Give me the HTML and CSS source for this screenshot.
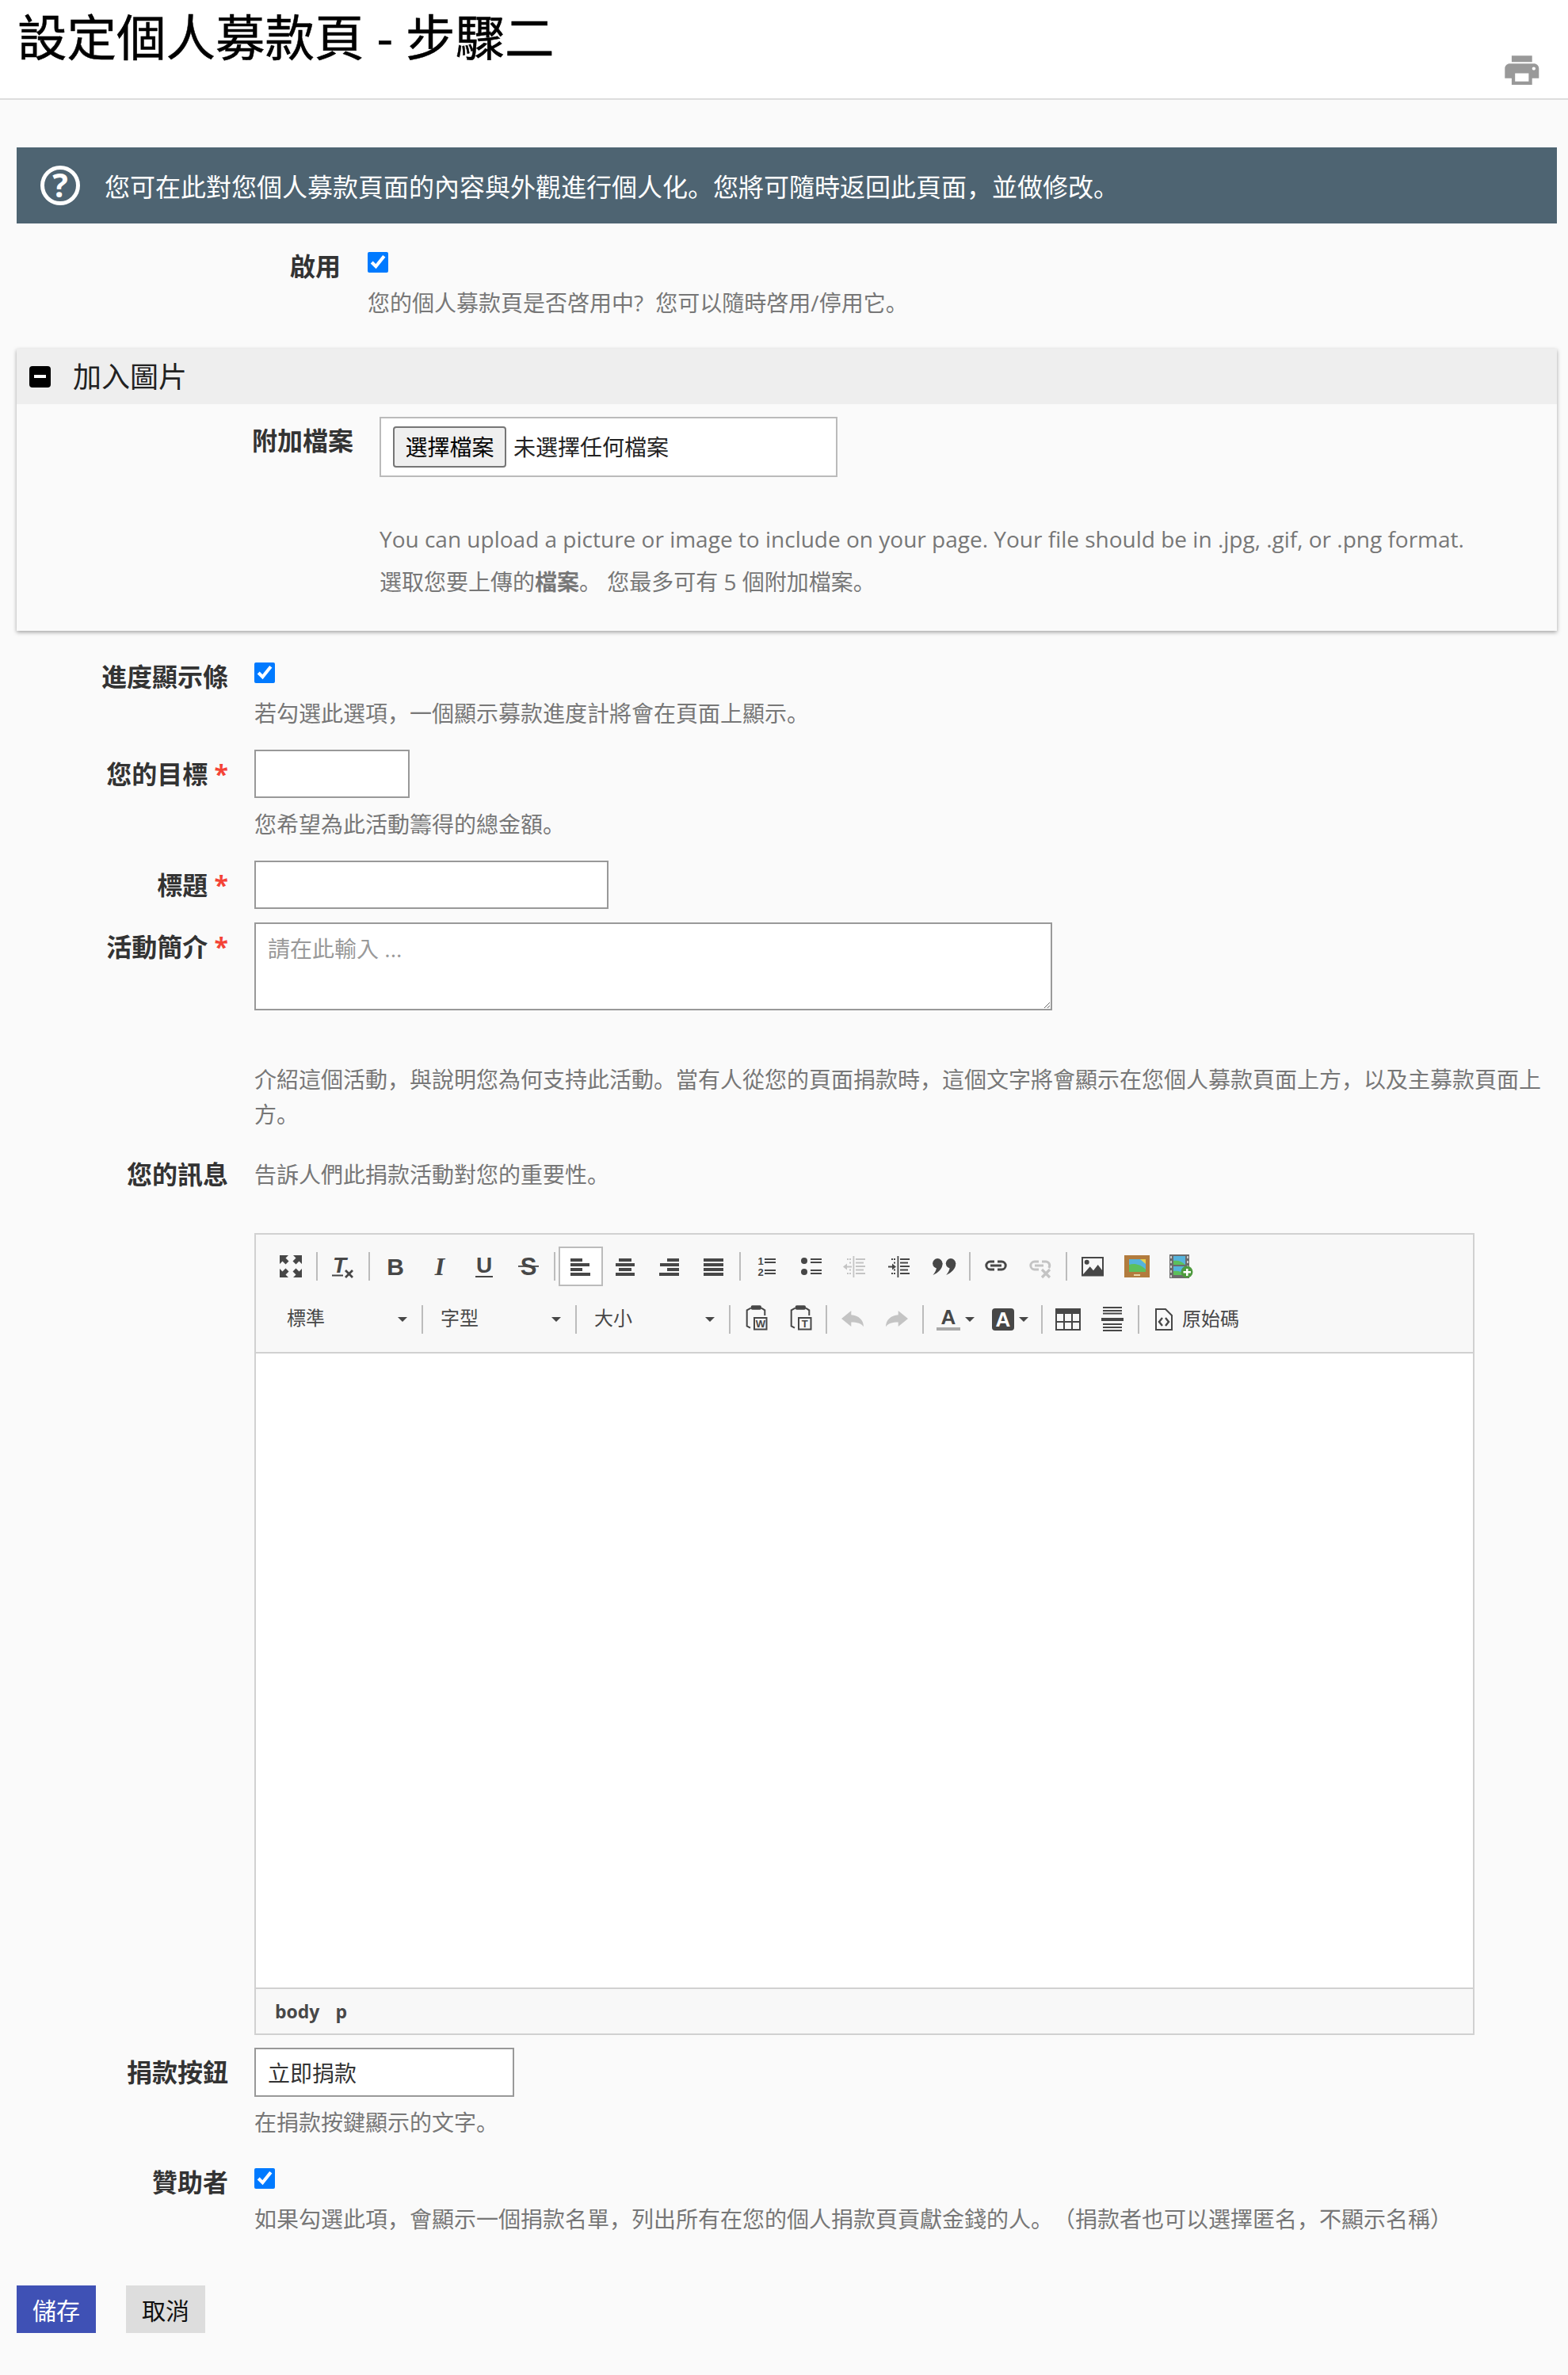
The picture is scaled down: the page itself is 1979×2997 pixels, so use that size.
FILE: index.html
```html
<!DOCTYPE html>
<html lang="zh-Hant">
<head>
<meta charset="utf-8">
<title>設定個人募款頁 - 步驟二</title>
<link rel="stylesheet" href="styles.css">
</head>
<body>
<header class="page-head">
  <h1>設定個人募款頁 - 步驟二</h1>
  <svg class="printer" viewBox="0 0 24 24" preserveAspectRatio="none"><path fill="#999" fill-rule="evenodd" d="M19 8H5c-1.66 0-3 1.34-3 3v6h4v4h12v-4h4v-6c0-1.66-1.34-3-3-3zm-3 11H8v-5h8v5zm3-7c-.55 0-1-.45-1-1s.45-1 1-1 1 .45 1 1-.45 1-1 1zm-1-9H6v4h12V3z"/></svg>
</header>
<main class="page">
  <div class="banner">
    <svg class="banner-icon" viewBox="0 0 50 50"><circle cx="25" cy="25" r="22.5" fill="none" stroke="#fff" stroke-width="5"/><text class="qmark" x="25" y="40" text-anchor="middle" fill="#fff">?</text></svg>
    <span>您可在此對您個人募款頁面的內容與外觀進行個人化。您將可隨時返回此頁面，並做修改。</span>
  </div>

  <div class="row row-enable">
    <label class="lab">啟用</label>
    <div class="ctl">
      <input class="chk" type="checkbox" checked>
      <p class="help help-chk help-enable">您的個人募款頁是否啓用中? 您可以隨時啓用/停用它。</p>
    </div>
  </div>

  <section class="panel">
    <div class="panel-head"><span class="toggle"></span><span class="panel-title">加入圖片</span></div>
    <div class="panel-body">
      <div class="row row-file">
        <label class="lab lab-field">附加檔案</label>
        <div class="ctl">
          <div class="filebox"><span class="filebtn">選擇檔案</span><span class="filename">未選擇任何檔案</span></div>
          <p class="help help-file">You can upload a picture or image to include on your page. Your file should be in .jpg, .gif, or .png format.</p>
          <p class="help help-file2">選取您要上傳的<b>檔案</b>。 您最多可有 5 個附加檔案。</p>
        </div>
      </div>
    </div>
  </section>

  <div class="row row-progress">
    <label class="lab">進度顯示條</label>
    <div class="ctl">
      <input class="chk" type="checkbox" checked>
      <p class="help help-chk">若勾選此選項，一個顯示募款進度計將會在頁面上顯示。</p>
    </div>
  </div>

  <div class="row row-gap24">
    <label class="lab lab-field">您的目標 <i class="req">*</i></label>
    <div class="ctl">
      <input class="inp inp-goal" type="text">
      <p class="help help-inp">您希望為此活動籌得的總金額。</p>
    </div>
  </div>

  <div class="row row-gap24">
    <label class="lab lab-field">標題 <i class="req">*</i></label>
    <div class="ctl"><input class="inp inp-title" type="text"></div>
  </div>

  <div class="row row-gap17">
    <label class="lab lab-field">活動簡介 <i class="req">*</i></label>
    <div class="ctl">
      <textarea class="area" placeholder="請在此輸入 ..."></textarea>
      <p class="help help-area">介紹這個活動，與說明您為何支持此活動。當有人從您的頁面捐款時，這個文字將會顯示在您個人募款頁面上方，以及主募款頁面上方。</p>
    </div>
  </div>

  <div class="row row-msg">
    <label class="lab">您的訊息</label>
    <div class="ctl">
      <p class="help help-msg">告訴人們此捐款活動對您的重要性。</p>
      <div class="editor">
        <div class="toolbar">
          <div class="tb-row">
            <span class="btn"><svg viewBox="0 0 28 28"><g fill="currentColor"><path d="M0 0h11L7.500 3.500l4 4-4 4-4-4L0 11z"/><path d="M28 0H17l3.500 3.500-4 4 4 4 4-4L28 11z"/><path d="M0 28h11l-3.500-3.500 4-4-4-4-4 4L0 17z"/><path d="M28 28H17l3.500-3.500-4-4 4-4 4 4L28 17z"/></g></svg></span>
            <span class="sep"></span>
            <span class="btn"><svg viewBox="0 0 28 28"><text class="t-i" x="1" y="22" fill="currentColor">T</text><rect y="24.500" width="14" height="2" fill="currentColor"/><path d="M17 19l9 9M26 19l-9 9" stroke="currentColor" stroke-width="2.800" fill="none"/></svg></span>
            <span class="sep"></span>
            <span class="btn"><svg viewBox="0 0 28 28"><text class="t-b" x="14" y="25" text-anchor="middle" fill="currentColor">B</text></svg></span>
            <span class="btn"><svg viewBox="0 0 28 28"><text class="t-si" x="14" y="25" text-anchor="middle" fill="currentColor">I</text></svg></span>
            <span class="btn"><svg viewBox="0 0 28 28"><text class="t-u" x="14" y="22" text-anchor="middle" fill="currentColor">U</text><rect x="3" y="26" width="22" height="2" fill="currentColor"/></svg></span>
            <span class="btn"><svg viewBox="0 0 28 28"><text class="t-s" x="14" y="25" text-anchor="middle" fill="currentColor">S</text><rect x="1" y="13" width="26" height="1.800" fill="currentColor"/></svg></span>
            <span class="sep"></span>
            <span class="btn btn-on"><svg viewBox="0 0 28 28"><path fill="currentColor" d="M1 4h15v4H1zM1 10h24v4H1zM1 16h15v4H1zM1 22h25v4H1z"/></svg></span>
            <span class="btn"><svg viewBox="0 0 28 28"><path fill="currentColor" d="M6 4h16v4H6zM2 10h24v4H2zM6 16h16v4H6zM2 22h24v4H2z"/></svg></span>
            <span class="btn"><svg viewBox="0 0 28 28"><path fill="currentColor" d="M11 4h15v4H11zM2 10h24v4H2zM11 16h15v4H11zM1 22h25v4H1z"/></svg></span>
            <span class="btn"><svg viewBox="0 0 28 28"><path fill="currentColor" d="M1 4h25v4H1zM1 10h25v4H1zM1 16h25v4H1zM1 22h25v4H1z"/></svg></span>
            <span class="sep"></span>
            <span class="btn"><svg viewBox="0 0 28 28"><text class="t-n" x="7" y="12" text-anchor="middle" fill="currentColor">1</text><text class="t-n" x="7" y="26" text-anchor="middle" fill="currentColor">2</text><path fill="currentColor" d="M12 4h14v2H12zM12 8h14v2H12zM12 18h14v2H12zM12 22h14v2H12z"/></svg></span>
            <span class="btn"><svg viewBox="0 0 28 28"><g fill="currentColor"><circle cx="6" cy="7" r="4"/><circle cx="6" cy="21" r="4"/><path d="M14 4h14v2H14zM14 8h14v2H14zM14 18h14v2H14zM14 22h14v2H14z"/></g></svg></span>
            <span class="btn dis"><svg viewBox="0 0 28 28"><g fill="currentColor"><path d="M11.500 1h1.800v27h-1.800zM15 4h12v2H15zM15 8.500h10v2H15zM15 13h12v2H15zM15 17.500h10v2H15zM15 22h12v2H15zM4 4h2v2H4zM7 4h2v2H7zM4 22h2v2H4zM7 22h2v2H7zM7 8.500h2v2H7zM7 17.500h2v2H7zM4 13.500h6v2H4z"/><path d="M-1 14.500l5-4v8z"/></g></svg></span>
            <span class="btn"><svg viewBox="0 0 28 28"><g fill="currentColor"><path d="M11.500 1h1.800v27h-1.800zM15 4h12v2H15zM15 8.500h10v2H15zM15 13h12v2H15zM15 17.500h10v2H15zM15 22h12v2H15zM4 4h2v2H4zM7 4h2v2H7zM4 22h2v2H4zM7 22h2v2H7zM7 8.500h2v2H7zM7 17.500h2v2H7zM0 13.500h6v2H0z"/><path d="M10 14.500l-5-4v8z"/></g></svg></span>
            <span class="btn"><svg viewBox="0 0 28 28"><g fill="currentColor"><circle cx="6.300" cy="10.300" r="6.200"/><circle cx="23" cy="10.300" r="6.200"/><path d="M12.500 10C13 17 7 22 .5 25 3.500 21 5 18 5 15zM29.200 10c.5 7-5.500 12-12 15 3-4 4.500-7 4.500-10z"/></g></svg></span>
            <span class="sep"></span>
            <span class="btn"><svg viewBox="0 0 28 28"><path fill="none" stroke="currentColor" stroke-width="3" d="M12 8H6.800a5 5 0 000 10H12M16 8h5.200a5 5 0 010 10H16M7 13h14"/></svg></span>
            <span class="btn dis"><svg viewBox="0 0 28 28"><path fill="none" stroke="currentColor" stroke-width="3" d="M12 8H6.800a5 5 0 000 10H12M16 8h5.200a5 5 0 013.500 8M7 13h11"/><path fill="none" stroke="currentColor" stroke-width="3.200" d="M16 18l10 10M26 18L16 28"/></svg></span>
            <span class="sep"></span>
            <span class="btn"><svg viewBox="0 0 28 28"><rect x="1" y="3" width="26" height="22.500" fill="none" stroke="currentColor" stroke-width="2"/><circle cx="6.700" cy="8.700" r="3" fill="currentColor"/><path fill="currentColor" d="M1 25.300L10.700 14.300 15 19.300 20.700 12 27.700 21V26H1z"/></svg></span>
            <span class="btn"><svg class="wide32" viewBox="0 0 32 28"><rect width="32" height="28" fill="#b27c3e"/><rect x="6" y="5" width="21" height="16" fill="#55b3dc"/><path fill="#5cc05c" d="M6 21V12C12 10 20 11 27 18V21z"/><path fill="#e6d24c" d="M20 5h7v6z"/><rect x="12" y="24" width="8" height="2" fill="#e8d8a8"/></svg></span>
            <span class="btn"><svg class="wide30" viewBox="0 0 30 30"><rect width="25" height="30" fill="#6b6b6b"/><path fill="#ccc" d="M1 2h2v3H1zM1 8h2v3H1zM1 14h2v3H1zM1 20h2v3H1zM1 26h2v3H1zM22 2h2v3h-2zM22 8h2v3h-2zM22 14h2v3h-2z"/><rect x="5" y="2" width="15" height="11" fill="#55b3dc"/><path fill="#5cc05c" d="M5 13V8c5-1 10 0 15 5z"/><rect x="5" y="15" width="15" height="11" fill="#55b3dc"/><path fill="#5cc05c" d="M5 26v-5c5-1 10 0 15 5z"/><circle cx="22" cy="22" r="7.500" fill="#4e9a3e"/><path fill="#fff" d="M21 18h2.500v3H27v2.500h-3.500V27H21v-3.500h-3.500V21H21z"/></svg></span>
          </div>
          <div class="tb-row tb-row2">
            <span class="combo"><span>標準</span><i class="caret"></i></span>
            <span class="sep"></span>
            <span class="combo"><span>字型</span><i class="caret"></i></span>
            <span class="sep"></span>
            <span class="combo"><span>大小</span><i class="caret"></i></span>
            <span class="sep"></span>
            <span class="btn"><svg viewBox="0 0 28 28"><path fill="none" stroke="currentColor" stroke-width="2" d="M7.700-.3L2.700 2.300V22.300L7 24.700M21-.3l4.300 2.600V9"/><rect x="7.700" y="-3.700" width="13.300" height="5.400" rx="2" fill="currentColor"/><rect x="12" y="12" width="15.500" height="14.500" fill="none" stroke="currentColor" stroke-width="2"/><text class="t-k" x="19.800" y="24" text-anchor="middle" fill="currentColor">W</text></svg></span>
            <span class="btn"><svg viewBox="0 0 28 28"><path fill="none" stroke="currentColor" stroke-width="2" d="M7.700-.3L2.700 2.300V22.300L7 24.700M21-.3l4.300 2.600V9"/><rect x="7.700" y="-3.700" width="13.300" height="5.400" rx="2" fill="currentColor"/><rect x="12" y="12" width="15.500" height="14.500" fill="none" stroke="currentColor" stroke-width="2"/><text class="t-k" x="19.800" y="24" text-anchor="middle" fill="currentColor">T</text></svg></span>
            <span class="sep"></span>
            <span class="btn dis"><svg viewBox="0 0 28 28"><path fill="currentColor" d="M0 13L12.300 3V8.300C22 9 28 15 28 23.300 25 19 20 17.500 12.300 17.500V23z"/></svg></span>
            <span class="btn dis"><svg viewBox="0 0 28 28"><path fill="currentColor" d="M28 13L15.700 3V8.300C6 9 0 15 0 23.300 3 19 8 17.500 15.700 17.500V23z"/></svg></span>
            <span class="sep"></span>
            <span class="btn btn-color"><svg class="wide30" viewBox="0 0 30 30"><text class="t-a" x="15" y="21" text-anchor="middle" fill="currentColor">A</text><rect y="25" width="30" height="4" fill="#aaa"/></svg><i class="caret"></i></span>
            <span class="btn btn-color"><svg viewBox="0 0 28 28"><rect width="28" height="28" rx="4" fill="currentColor"/><text class="t-a" x="14" y="23" text-anchor="middle" fill="#fff">A</text></svg><i class="caret"></i></span>
            <span class="sep"></span>
            <span class="btn"><svg class="wide32" viewBox="0 0 32 28"><rect width="32" height="7" fill="currentColor"/><rect x="1" y="1" width="30" height="26" fill="none" stroke="currentColor" stroke-width="2"/><path fill="none" stroke="currentColor" stroke-width="2" d="M11 7v20M21 7v20M1 17h30"/></svg></span>
            <span class="btn"><svg viewBox="0 0 28 28"><path fill="currentColor" d="M2-2h24v2H2zM2 2h24v2H2zM2 5.500h24v2H2zM0 12h28v4H0zM2 19h24v2H2zM2 23h24v2H2zM2 27h24v2H2z"/></svg></span>
            <span class="sep"></span>
            <span class="src"><svg viewBox="0 0 22 28"><path fill="none" stroke="currentColor" stroke-width="2" d="M1 1h12l8 8v18H1z"/><path fill="none" stroke="currentColor" stroke-width="2.400" d="M9 12l-4 5 4 5M13 12l4 5-4 5"/></svg><span class="src-label">原始碼</span></span>
          </div>
        </div>
        <div class="edit-area"></div>
        <div class="statusbar"><span>body</span><span>p</span></div>
      </div>
    </div>
  </div>

  <div class="row row-gap16">
    <label class="lab lab-field">捐款按鈕</label>
    <div class="ctl">
      <input class="inp inp-btn" type="text" value="立即捐款">
      <p class="help help-btn">在捐款按鍵顯示的文字。</p>
    </div>
  </div>

  <div class="row row-sponsor">
    <label class="lab">贊助者</label>
    <div class="ctl">
      <input class="chk" type="checkbox" checked>
      <p class="help help-chk">如果勾選此項，會顯示一個捐款名單，列出所有在您的個人捐款頁貢獻金錢的人。（捐款者也可以選擇匿名，不顯示名稱）</p>
    </div>
  </div>

  <div class="actions">
    <button class="act act-save" type="button">儲存</button>
    <button class="act act-cancel" type="button">取消</button>
  </div>
</main>
</body>
</html>
```
FILE: styles.css
```css
* { box-sizing: border-box; }
html, body { margin: 0; padding: 0; }
body {
  background: #fafafa;
  color: #333;
  font-family: "Open Sans", "Noto Sans CJK SC", sans-serif;
  font-size: 28px;
  font-feature-settings: "locl" 0;
  text-spacing-trim: space-all;
}
input, textarea, button { font-feature-settings: "locl" 0; text-spacing-trim: space-all; }
p { margin: 0; }

.page-head {
  display: flex;
  justify-content: space-between;
  align-items: flex-end;
  height: 126px;
  padding: 0 32px 11px 22px;
  background: #fff;
  border-bottom: 2px solid #ddd;
}
.page-head h1 {
  align-self: flex-start;
  margin: 0;
  padding-top: 8px;
  font-size: 62.500px;
  line-height: 78px;
  font-weight: 400;
  color: #000;
  -webkit-text-stroke: .5px #000;
}
.printer { width: 51.6px; height: 49px; }

.page { padding: 0 14px 53px 21px; }

.banner {
  display: flex;
  align-items: center;
  gap: 31px;
  height: 96px;
  margin-top: 60px;
  padding-left: 30px;
  background: #4e6472;
  color: #fff;
  font-size: 32px;
}
.banner-icon { width: 50px; height: 50px; flex: none; overflow: visible; }
.qmark { font: 700 41px "Open Sans", sans-serif; }

.row { display: flex; gap: 33px; }
.lab {
  flex: none;
  width: 267px;
  text-align: right;
  font-size: 32px;
  line-height: 44px;
  font-weight: 700;
  color: #333;
}
.lab-field { padding-top: 9px; line-height: 44px; }
.ctl { flex: 1; min-width: 0; }
.req { color: #f44336; font-style: normal; }

.help { font-size: 28px; line-height: 44px; color: #777; }
.help b { font-weight: 700; }
.chk {
  display: block;
  width: 26px;
  height: 26px;
  margin: 4px 0 0;
  accent-color: #007aff;
}
.help-chk { margin-top: 16px; }
.help-enable { word-spacing: 8px; }

.row-enable { margin-top: 32px; gap: 34px; }
.row-enable .lab { width: 409px; }

.panel {
  margin-top: 36px;
  background: #fafafa;
  box-shadow: 0 2px 5px rgba(0, 0, 0, .35);
}
.panel-head {
  display: flex;
  align-items: center;
  gap: 28px;
  height: 70px;
  padding-left: 16px;
  background: #eee;
  font-size: 36px;
  color: #222;
}
.panel-title { margin-bottom: 3px; }
.toggle {
  position: relative;
  flex: none;
  width: 27px;
  height: 27px;
  border-radius: 4px;
  background: #000;
}
.toggle::after {
  content: "";
  position: absolute;
  left: 6px;
  right: 6px;
  top: 11px;
  height: 4px;
  background: #fff;
}
.panel-body { padding: 16px 0 37px; }
.row-file .lab { width: 425px; }
.row-file .lab-field { padding-top: 8px; }
.filebox {
  display: flex;
  align-items: center;
  gap: 9px;
  width: 578px;
  height: 76px;
  padding-left: 15px;
  background: #fff;
  border: 2px solid #bbb;
  color: #222;
}
.filebtn {
  display: flex;
  align-items: center;
  justify-content: center;
  width: 143px;
  height: 52px;
  padding-bottom: 2px;
  background: #efefef;
  border: 2px solid #767676;
  border-radius: 4px;
  color: #000;
}
.filename { margin-bottom: 2px; }
.help-file { margin-top: 53px; line-height: 50px; }
.help-file2 { margin-top: 4px; line-height: 50px; }

.row-progress { margin-top: 36px; }
.row-gap24 { margin-top: 24px; }
.row-gap17 { margin-top: 17px; }
.row-gap16 { margin-top: 16px; }
.row-msg { margin-top: 30px; }
.row-msg .lab { padding-top: 2px; }
.row-sponsor { margin-top: 32px; }

.inp {
  display: block;
  height: 61px;
  padding: 0 15px;
  background: #fff;
  border: 2px solid #999;
  border-radius: 0;
  font: 28px "Open Sans", "Noto Sans CJK SC", sans-serif;
  color: #333;
  outline: none;
}
.inp-goal { width: 196px; }
.inp-title { width: 447px; }
.inp-btn { width: 328px; height: 62px; }
.help-inp { margin-top: 11px; }
.help-btn { margin-top: 10px; }

.area {
  display: block;
  width: 1007px;
  height: 111px;
  padding: 11px 15px;
  background: #fff;
  border: 2px solid #999;
  border-radius: 0;
  font: 28px/40px "Open Sans", "Noto Sans CJK SC", sans-serif;
  color: #333;
}
.area::placeholder { color: #999; opacity: 1; }
.help-area { margin-top: 65px; }
.help-msg { margin-top: 2px; }

.editor {
  width: 1540px;
  margin-top: 52px;
  background: #f8f8f8;
  border: 2px solid #d1d1d1;
}
.toolbar {
  padding: 15px 0 16px 16px;
  border-bottom: 2px solid #d1d1d1;
  color: #474747;
}
.tb-row { display: flex; align-items: center; height: 50px; }
.tb-row2 { margin-top: 17px; padding-left: 5px; }
.sep {
  flex: none;
  width: 2px;
  height: 36px;
  margin: 0 4px;
  background: #bcbcbc;
}
.btn {
  display: flex;
  align-items: center;
  justify-content: center;
  flex: none;
  width: 56px;
  height: 50px;
}
.btn svg { flex: none; width: 28px; height: 28px; overflow: visible; }
.btn svg.wide32 { width: 32px; }
.btn svg.wide30 { width: 30px; height: 30px; }
.btn-on { background: #fff; border: 2px solid #bcbcbc; }
.dis { color: #c4c4c4; }
.btn-color { width: 70px; justify-content: flex-start; gap: 6px; padding-left: 12px; }
.caret {
  flex: none;
  width: 0;
  height: 0;
  border-left: 6px solid transparent;
  border-right: 6px solid transparent;
  border-top: 6px solid #474747;
}
.combo {
  display: flex;
  align-items: center;
  justify-content: space-between;
  flex: none;
  width: 184px;
  height: 50px;
  padding: 0 14px 0 18px;
  font-size: 24px;
  color: #484848;
}
.combo span { margin-bottom: 7px; }
.src {
  display: flex;
  align-items: center;
  gap: 12px;
  padding-left: 16px;
  font-size: 24px;
  color: #484848;
}
.src svg { width: 22px; height: 28px; }
.src-label { margin-bottom: 5px; }

.t-b { font: 700 30px "Liberation Sans", sans-serif; }
.t-s { font: 700 31px "Liberation Sans", sans-serif; }
.t-i { font: italic 700 28px "Liberation Sans", sans-serif; }
.t-si { font: italic 700 32px "Liberation Serif", serif; }
.t-u { font: 700 28px "Liberation Sans", sans-serif; }
.t-n { font: 700 13px "Liberation Sans", sans-serif; }
.t-k { font: 700 13px "Liberation Sans", sans-serif; }
.t-a { font: 700 26px "Liberation Sans", sans-serif; }

.edit-area { height: 800px; background: #fff; }
.statusbar {
  display: flex;
  align-items: center;
  gap: 20px;
  height: 58px;
  padding-left: 24px;
  border-top: 2px solid #d1d1d1;
  font-size: 23px;
  font-weight: 700;
  color: #484848;
}

.actions { display: flex; gap: 38px; margin-top: 62px; }
.act {
  width: 100px;
  height: 60px;
  padding: 0;
  border: 0;
  border-radius: 0;
  font: 30px "Open Sans", "Noto Sans CJK SC", sans-serif;
}
.act-save { background: #3f51b5; color: #fff; }
.act-cancel { background: #ddd; color: #111; }
```
